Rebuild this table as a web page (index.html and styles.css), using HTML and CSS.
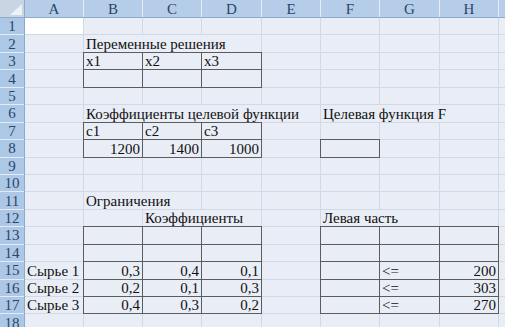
FILE: index.html
```html
<!DOCTYPE html>
<html lang="ru">
<head>
<meta charset="utf-8">
<title>Лист</title>
<link rel="stylesheet" href="styles.css">
</head>
<body>
<div class="sheet">
  <div class="corner"><span class="tri"></span></div>
  <div class="ch">A</div><div class="ch">B</div><div class="ch">C</div><div class="ch">D</div><div class="ch">E</div><div class="ch">F</div><div class="ch">G</div><div class="ch">H</div><div class="ch"></div>

  <div class="rh">1</div>
  <div class="c w"></div><div class="c"></div><div class="c"></div><div class="c"></div><div class="c"></div><div class="c"></div><div class="c"></div><div class="c"></div><div class="c"></div>

  <div class="rh">2</div>
  <div class="c"></div><div class="c s3">Переменные решения</div><div class="c"></div><div class="c"></div><div class="c"></div><div class="c"></div><div class="c"></div>

  <div class="rh">3</div>
  <div class="c"></div><div class="c b">x1</div><div class="c b">x2</div><div class="c b">x3</div><div class="c"></div><div class="c"></div><div class="c"></div><div class="c"></div><div class="c"></div>

  <div class="rh">4</div>
  <div class="c"></div><div class="c b"></div><div class="c b"></div><div class="c b"></div><div class="c"></div><div class="c"></div><div class="c"></div><div class="c"></div><div class="c"></div>

  <div class="rh">5</div>
  <div class="c"></div><div class="c"></div><div class="c"></div><div class="c"></div><div class="c"></div><div class="c"></div><div class="c"></div><div class="c"></div><div class="c"></div>

  <div class="rh">6</div>
  <div class="c"></div><div class="c s4">Коэффициенты целевой функции</div><div class="c s3">Целевая функция F</div><div class="c"></div>

  <div class="rh">7</div>
  <div class="c"></div><div class="c b">c1</div><div class="c b">c2</div><div class="c b">c3</div><div class="c"></div><div class="c"></div><div class="c"></div><div class="c"></div><div class="c"></div>

  <div class="rh">8</div>
  <div class="c"></div><div class="c b r">1200</div><div class="c b r">1400</div><div class="c b r">1000</div><div class="c"></div><div class="c b"></div><div class="c"></div><div class="c"></div><div class="c"></div>

  <div class="rh">9</div>
  <div class="c"></div><div class="c"></div><div class="c"></div><div class="c"></div><div class="c"></div><div class="c"></div><div class="c"></div><div class="c"></div><div class="c"></div>

  <div class="rh">10</div>
  <div class="c"></div><div class="c"></div><div class="c"></div><div class="c"></div><div class="c"></div><div class="c"></div><div class="c"></div><div class="c"></div><div class="c"></div>

  <div class="rh">11</div>
  <div class="c"></div><div class="c s2">Ограничения</div><div class="c"></div><div class="c"></div><div class="c"></div><div class="c"></div><div class="c"></div><div class="c"></div>

  <div class="rh">12</div>
  <div class="c"></div><div class="c"></div><div class="c s2">Коэффициенты</div><div class="c"></div><div class="c s2">Левая часть</div><div class="c"></div><div class="c"></div>

  <div class="rh">13</div>
  <div class="c"></div><div class="c b"></div><div class="c b"></div><div class="c b"></div><div class="c"></div><div class="c b"></div><div class="c b"></div><div class="c b"></div><div class="c"></div>

  <div class="rh">14</div>
  <div class="c"></div><div class="c b"></div><div class="c b"></div><div class="c b"></div><div class="c"></div><div class="c b"></div><div class="c b"></div><div class="c b"></div><div class="c"></div>

  <div class="rh">15</div>
  <div class="c">Сырье 1</div><div class="c b r">0,3</div><div class="c b r">0,4</div><div class="c b r">0,1</div><div class="c"></div><div class="c b"></div><div class="c b">&lt;=</div><div class="c b r">200</div><div class="c"></div>

  <div class="rh">16</div>
  <div class="c">Сырье 2</div><div class="c b r">0,2</div><div class="c b r">0,1</div><div class="c b r">0,3</div><div class="c"></div><div class="c b"></div><div class="c b">&lt;=</div><div class="c b r">303</div><div class="c"></div>

  <div class="rh">17</div>
  <div class="c">Сырье 3</div><div class="c b r">0,4</div><div class="c b r">0,3</div><div class="c b r">0,2</div><div class="c"></div><div class="c b"></div><div class="c b">&lt;=</div><div class="c b r">270</div><div class="c"></div>

  <div class="rh">18</div>
  <div class="c"></div><div class="c"></div><div class="c"></div><div class="c"></div><div class="c"></div><div class="c"></div><div class="c"></div><div class="c"></div><div class="c"></div>
</div>
</body>
</html>
```
FILE: styles.css
```css
html, body {
  margin: 0;
  padding: 0;
  width: 505px;
  height: 327px;
  overflow: hidden;
  background: #e9edf5;
}

.sheet {
  display: grid;
  grid-template-columns: 24px 58px 58px 58px 59px 58px 58px 59px 58px 1fr;
  grid-template-rows: 17px repeat(18, 16.45px);
  gap: 1px;
  background: #d2d9e6;
  width: 505px;
  font-family: "Times New Roman", "Liberation Serif", "DejaVu Serif", serif;
  font-size: 15px;
  color: #111;
}

.corner {
  position: relative;
  background: #c9d5e3;
  box-shadow: 1px 0 0 #8fa9c9, 0 1px 0 #8fa9c9, 1px 1px 0 #8fa9c9;
}

.tri {
  position: absolute;
  right: 2px;
  bottom: 2px;
  width: 0;
  height: 0;
  border-left: 12px solid transparent;
  border-bottom: 11px solid #eef1f5;
}

.ch {
  background: #b6cde9;
  color: #2a4668;
  font-size: 15px;
  display: flex;
  align-items: center;
  justify-content: center;
  line-height: 1;
  padding-top: 1px;
  box-shadow: 1px 0 0 #e2ebf6, 0 1px 0 #8fa9c9, 1px 1px 0 #8fa9c9;
}

.rh {
  background: #adc7e7;
  color: #2a4668;
  font-size: 15px;
  display: flex;
  align-items: center;
  justify-content: center;
  line-height: 1;
  padding-top: 1px;
  box-shadow: 0 1px 0 #e2ebf6, 1px 0 0 #8fa9c9, 1px 1px 0 #8fa9c9;
}

.c {
  background: #e9edf5;
  display: flex;
  align-items: flex-end;
  padding: 0 1px 0 2px;
  line-height: 15px;
  white-space: nowrap;
  overflow: visible;
  min-width: 0;
}

.w {
  background: #ffffff;
}

.b {
  box-shadow: 0 0 0 1px #5c5c5c;
}

.r {
  justify-content: flex-end;
  padding-right: 2px;
}

.s2 {
  grid-column: span 2;
}

.s3 {
  grid-column: span 3;
}

.s4 {
  grid-column: span 4;
}
```
